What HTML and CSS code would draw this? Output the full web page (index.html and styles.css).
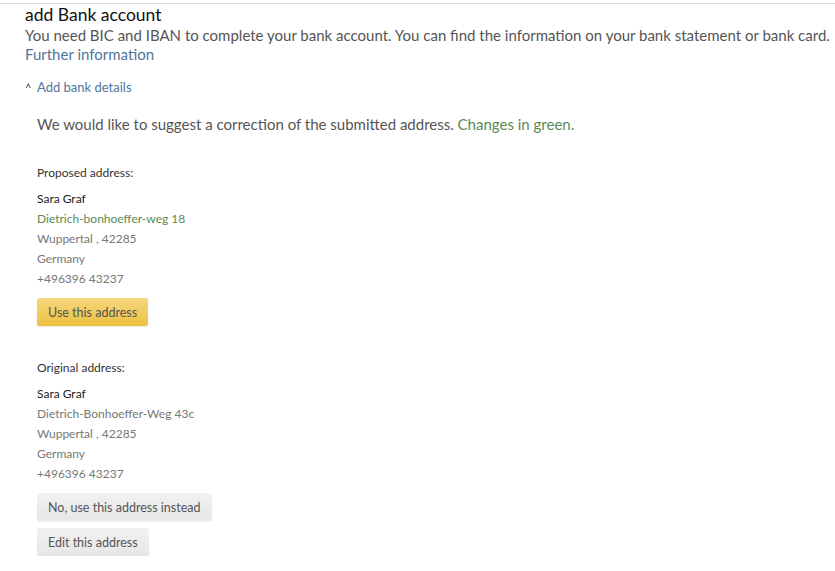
FILE: index.html
```html
<!DOCTYPE html>
<html>
<head>
<meta charset="utf-8">
<link rel="stylesheet" href="styles.css">
</head>
<body>
<div class="page">
  <div class="header">
    <h1 class="title">add Bank account</h1>
    <p class="intro">You need BIC and IBAN to complete your bank account. You can find the information on your bank statement or bank card.</p>
    <a class="link more">Further information</a>
  </div>
  <a class="link toggle"><span class="caret">^</span>Add bank details</a>
  <div class="panel">
    <p class="notice">We would like to suggest a correction of the submitted address. <span class="green">Changes in green.</span></p>
    <div class="block">
      <div class="label">Proposed address:</div>
      <div class="name">Sara Graf</div>
      <div class="line green">Dietrich-bonhoeffer-weg 18</div>
      <div class="line">Wuppertal , 42285</div>
      <div class="line">Germany</div>
      <div class="line">+496396 43237</div>
      <button class="btn primary">Use this address</button>
    </div>
    <div class="block">
      <div class="label">Original address:</div>
      <div class="name">Sara Graf</div>
      <div class="line">Dietrich-Bonhoeffer-Weg 43c</div>
      <div class="line">Wuppertal , 42285</div>
      <div class="line">Germany</div>
      <div class="line">+496396 43237</div>
      <div class="actions">
        <button class="btn secondary">No, use this address instead</button>
        <button class="btn secondary">Edit this address</button>
      </div>
    </div>
  </div>
</div>
</body>
</html>
```
FILE: styles.css
```css
* { box-sizing: border-box; }
html, body { margin: 0; padding: 0; background: #fff; }
body { font-family: "Lato", "Open Sans", sans-serif; color: #555; }
.page { border-top: 1px solid #dcdcdc; margin-top: 3px; padding: 0 0 0 25px; }
.header { display: flex; flex-direction: column; align-items: flex-start; }
.title { margin: 0; font-size: 17.5px; font-weight: 400; color: #111; line-height: 21px; }
.intro { margin: 0; font-size: 15px; line-height: 20px; color: #555; white-space: nowrap; }
.link { color: #50769c; text-decoration: none; }
.more { font-size: 15px; line-height: 19px; }
.toggle { display: block; margin-top: 15px; font-size: 13px; line-height: 16px; }
.caret { display: inline-block; font-size: 11px; color: #333; width: 12px; }
.panel { padding: 18px 0 0 12px; }
.notice { margin: 0; font-size: 15px; line-height: 20px; color: #555; }
.green { color: #5a8a56; }
.block { margin-top: 31px; display: flex; flex-direction: column; align-items: flex-start; }
.block + .block { margin-top: 34px; }
.label { font-size: 12px; line-height: 16px; color: #333; margin-bottom: 8px; }
.name, .line { font-size: 12px; line-height: 20px; }
.name { color: #222; }
.line { color: #777; }
.line.green { color: #5a8a56; }
.btn { font-family: inherit; font-size: 12.5px; color: #555; height: 28px; border: none; border-radius: 2px; padding: 0 11px; margin-top: 9px; cursor: pointer; }
.primary { background: linear-gradient(#f6d680, #ecc13f); box-shadow: 0 1px 1px rgba(0,0,0,0.08); }
.secondary { background: linear-gradient(#f2f2f2, #e6e6e6); box-shadow: 0 1px 1px rgba(0,0,0,0.06); }
.actions { display: flex; flex-direction: column; align-items: flex-start; gap: 7px; margin-top: 9px; }
.actions .btn { margin-top: 0; }
```
